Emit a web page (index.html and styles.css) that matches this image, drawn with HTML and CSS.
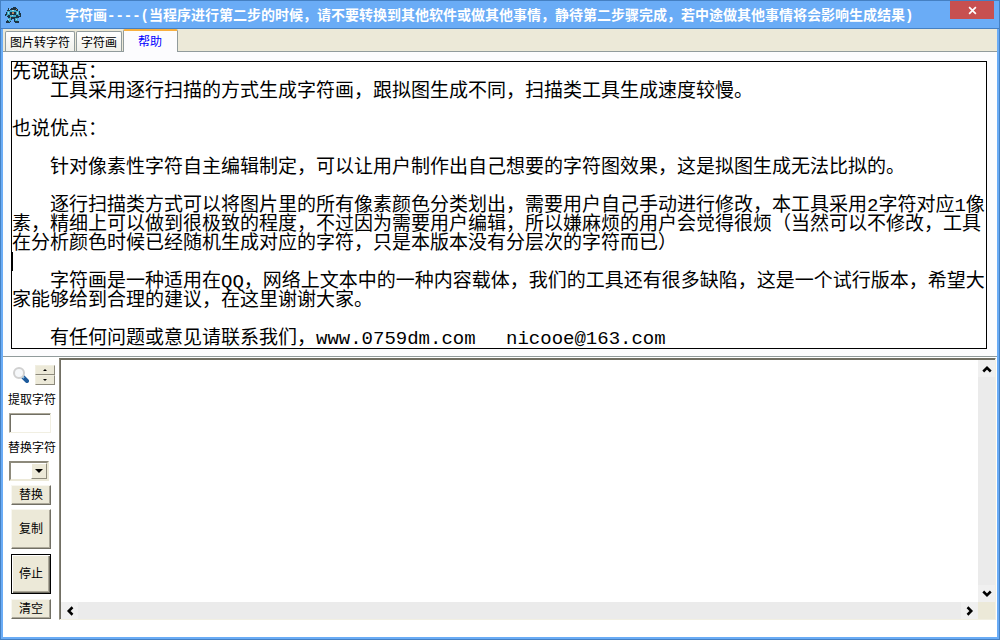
FILE: index.html
```html
<!DOCTYPE html>
<html lang="zh-CN">
<head>
  <meta charset="UTF-8">
  <meta name="viewport" content="width=device-width, initial-scale=1">
  <title>字符画</title>
  <link rel="stylesheet" href="styles.css">
</head>
<body>
  <div class="window">
    <header class="titlebar">
      <svg class="app-icon" viewBox="0 0 16 18" shape-rendering="crispEdges">
        <path fill="#1c3444" d="M3 2h1v1h2V2h2V1h3v1h1v1h1v2h2v2h1v4h-2v1h-1v3h1v2h-4v-1h-1v-2H9v-1H7v1H6v2H5v1H1v-2h1v-1h1v-3H2v-1H0V8h1V6h1V4h1z"/>
        <path fill="#3fa9c6" d="M2 5h3v4H2zM11 5h3v4h-3zM3 12h3v3H3zM10 12h3v3h-3zM5 4h6v2H5zM5 9h6v2H5zM4 15h1v1H4zM1 9h2v1H1zM13 9h2v1h-2z"/>
        <path fill="#a8dbe4" d="M4 3h1v1H4zM7 4h2v1H7zM3 6h1v2H3zM12 6h1v2h-1zM7 9h1v1H7zM3 13h1v1H3zM11 13h1v1h-1z"/>
        <path fill="#b98a5c" d="M7 6h2v2H7zM11 3h1v1h-1zM5 11h1v1H5z"/>
      </svg>
      <h1>字符画----(当程序进行第二步的时候，请不要转换到其他软件或做其他事情，静待第二步骤完成，若中途做其他事情将会影响生成结果)</h1>
      <button class="close" type="button" aria-label="关闭">
        <svg viewBox="0 0 8 8"><path d="M1 1l6 6M7 1L1 7"/></svg>
      </button>
    </header>

    <nav class="tabs">
      <button type="button" class="tab">图片转字符</button>
      <button type="button" class="tab">字符画</button>
      <button type="button" class="tab active">帮助</button>
    </nav>

    <section class="help">
      <textarea class="help-text" rows="15" spellcheck="false" aria-label="帮助">先说缺点：
　　工具采用逐行扫描的方式生成字符画，跟拟图生成不同，扫描类工具生成速度较慢。

也说优点：

　　针对像素性字符自主编辑制定，可以让用户制作出自己想要的字符图效果，这是拟图生成无法比拟的。

　　逐行扫描类方式可以将图片里的所有像素颜色分类划出，需要用户自己手动进行修改，本工具采用2字符对应1像素，精细上可以做到很极致的程度，不过因为需要用户编辑，所以嫌麻烦的用户会觉得很烦（当然可以不修改，工具在分析颜色时候已经随机生成对应的字符，只是本版本没有分层次的字符而已）

　　字符画是一种适用在QQ，网络上文本中的一种内容载体，我们的工具还有很多缺陷，这是一个试行版本，希望大家能够给到合理的建议，在这里谢谢大家。

　　有任何问题或意见请联系我们，www.0759dm.com　 nicooe@163.com</textarea>
      <span class="caret"></span>
    </section>

    <main class="work">
      <aside class="tools">
        <div class="zoom-row">
          <svg class="magnifier" viewBox="0 0 16 16">
            <path d="M10 10l4 4" stroke="#1d5a9c" stroke-width="4" stroke-linecap="round"/>
            <path d="M9 9l2 2" stroke="#8cc0e4" stroke-width="2"/>
            <circle cx="6" cy="6" r="5" fill="#f6f8fa" stroke="#d0d0d0" stroke-width="2"/>
          </svg>
          <div class="spinner">
            <button type="button" aria-label="增加"><svg viewBox="0 0 4 2"><path d="M0 2l2-2 2 2z"/></svg></button>
            <button type="button" aria-label="减少"><svg viewBox="0 0 4 2"><path d="M0 0l2 2 2-2z"/></svg></button>
          </div>
        </div>
        <label for="pick">提取字符</label>
        <input class="pick" id="pick" type="text">
        <label for="swap">替换字符</label>
        <div class="combo">
          <select id="swap"><option></option></select>
          <span class="combo-arrow"><svg viewBox="0 0 8 4"><path d="M0 0h8L4 4z"/></svg></span>
        </div>
        <button type="button" class="btn">替换</button>
        <button type="button" class="btn tall">复制</button>
        <button type="button" class="btn tall default">停止</button>
        <button type="button" class="btn">清空</button>
      </aside>

      <div class="output">
        <textarea class="output-text" spellcheck="false" aria-label="字符画"></textarea>
        <div class="scroll vertical">
          <button type="button" aria-label="向上"><svg viewBox="0 0 8 8"><path d="M1 6l3-3 3 3"/></svg></button>
          <button type="button" aria-label="向下"><svg viewBox="0 0 8 8"><path d="M1 2l3 3 3-3"/></svg></button>
        </div>
        <div class="scroll horizontal">
          <button type="button" aria-label="向左"><svg viewBox="0 0 8 8"><path d="M6 1L3 4l3 3"/></svg></button>
          <button type="button" aria-label="向右"><svg viewBox="0 0 8 8"><path d="M2 1l3 3-3 3"/></svg></button>
        </div>
        <div class="corner"></div>
      </div>
    </main>
  </div>
</body>
</html>
```
FILE: styles.css
```css
* {
  box-sizing: border-box;
}

body {
  margin: 0;
  font-family: "Noto Sans CJK SC", sans-serif;
  font-size: 12px;
  color: #000;
}

button, input, select, textarea {
  font: inherit;
  color: inherit;
  margin: 0;
  padding: 0;
  border: 0;
  border-radius: 0;
  outline: none;
}

svg {
  display: block;
}

.window {
  display: flex;
  flex-direction: column;
  height: 100vh;
  border: 1px solid #4580c2;
  background: #fcfcfe;
  box-shadow: inset 0 0 0 2px #6aacf6;
  padding: 0 2px 2px 2px;
}

/* title bar */
.titlebar {
  display: flex;
  align-items: center;
  height: 28px;
  flex: none;
  margin: 0 -2px;
  padding-left: 4px;
  background: #6aacf6;
  border-bottom: 1px solid #4580c2;
}

.app-icon {
  width: 16px;
  height: 18px;
}

.titlebar h1 {
  flex: 1;
  margin: 0 0 0 44px;
  padding-top: 2px;
  font-family: "Liberation Mono", "Noto Sans CJK SC", monospace;
  font-size: 14px;
  line-height: 20px;
  font-weight: bold;
  color: #fff;
  white-space: nowrap;
}

.close {
  align-self: flex-start;
  display: grid;
  place-items: center;
  width: 44px;
  height: 18px;
  margin-right: 5px;
  background: #c75050;
}

.close svg {
  width: 9px;
  height: 9px;
  fill: none;
  stroke: #fff;
  stroke-width: 1.5;
}

/* tabs */
.tabs {
  display: flex;
  align-items: flex-end;
  height: 23px;
  flex: none;
  padding-left: 2px;
  background: #ece9d8;
  border-bottom: 1px solid #919b9c;
}

.tab {
  height: 20px;
  margin-right: 1px;
  padding: 0 4px;
  line-height: 18px;
  background: linear-gradient(#fff, #f0f0ea);
  border: 1px solid #919b9c;
  border-bottom: 0;
  border-radius: 2px 2px 0 0;
}

.tab.active {
  height: 23px;
  margin: 0 0 -1px 0;
  padding: 0 15px 2px 14px;
  color: #00f;
  background: #fcfcfe;
  border-top: 2px solid #f8b040;
}

/* help page */
.help {
  position: relative;
  flex: none;
  padding: 9px 10px 7px 8px;
  border-bottom: 1px solid #919b9c;
}

.help-text {
  display: block;
  width: 100%;
  height: 288px;
  padding-top: 2px;
  border: 1px solid #000;
  background: #fff;
  font-family: "Liberation Mono", "Noto Sans CJK SC", monospace;
  font-size: 19px;
  line-height: 19px;
  resize: none;
  overflow: hidden;
}

.caret {
  position: absolute;
  left: 9px;
  top: 200px;
  width: 1px;
  height: 19px;
  background: #000;
}

/* lower part */
.work {
  flex: 1;
  display: flex;
  min-height: 0;
  padding: 1px 1px 17px 1px;
  background: #fff;
}

.tools {
  width: 55px;
  flex: none;
  display: flex;
  flex-direction: column;
  padding: 7px 3px 0 5px;
}

.tools label {
  margin: 4px -2px 4px -1px;
  line-height: 20px;
  white-space: nowrap;
}

.zoom-row {
  display: flex;
  align-items: center;
  gap: 6px;
  padding-left: 4px;
}

.magnifier {
  width: 16px;
  height: 16px;
}

.spinner button {
  display: grid;
  place-items: center;
  width: 20px;
  height: 10px;
  background: #ece9d8;
  border: 1px solid #fff;
  border-color: #f1efe2 #8d8a7c #8d8a7c #f1efe2;
}

.spinner svg {
  width: 4px;
  height: 2px;
}

.pick {
  width: 42px;
  height: 20px;
  background: #fff;
  border: 1px solid #ece9d8;
  border-color: #aca899 #f1efe2 #f1efe2 #aca899;
  box-shadow: inset 1px 1px #716f64;
}

.combo {
  display: flex;
  width: 40px;
  height: 20px;
  border: 2px solid #8d8a7c;
  border-color: #8d8a7c #ece9d8 #ece9d8 #8d8a7c;
}

.combo select {
  flex: 1;
  min-width: 0;
  appearance: none;
  background: #fff;
}

.combo-arrow {
  display: grid;
  place-items: center;
  width: 16px;
  background: #ece9d8;
  border: 1px solid #fff;
  border-color: #fff #8d8a7c #8d8a7c #fff;
  pointer-events: none;
}

.combo-arrow svg {
  width: 8px;
  height: 4px;
}

.btn {
  width: 40px;
  height: 20px;
  flex: none;
  margin: 4px 0 0 2px;
  padding-bottom: 2px;
  line-height: 16px;
  background: #ece9d8;
  border: 1px solid #fff;
  border-color: #f8f7f0 #716f64 #716f64 #f8f7f0;
  box-shadow: inset -1px -1px #aca899;
}

.btn.tall {
  height: 40px;
}

.btn.default {
  margin: 5px 0 1px 2px;
  border-color: #000;
  box-shadow: inset 1px 1px #fff, inset -1px -1px #716f64, inset -2px -2px #aca899;
}

/* output box with its scroll bars */
.output {
  flex: 1;
  display: grid;
  grid-template-columns: 1fr 17px;
  grid-template-rows: 1fr 17px;
  border: 1px solid #8d8a7c;
  border-color: #716f64 #f1efe2 #f1efe2 #8d8a7c;
  box-shadow: inset 1px 1px #716f64;
  padding: 1px 0 0 1px;
}

.output-text {
  width: 100%;
  height: 100%;
  background: #fff;
  resize: none;
}

.scroll {
  display: flex;
  justify-content: space-between;
  background: #ebebeb;
}

.scroll.vertical {
  flex-direction: column;
}

.scroll button {
  display: grid;
  place-items: center;
  width: 17px;
  height: 17px;
  background: #f0f0f0;
}

.scroll svg {
  width: 10px;
  height: 10px;
  fill: none;
  stroke: #000;
  stroke-width: 2;
}

.corner {
  background: #ece9d8;
}
```
